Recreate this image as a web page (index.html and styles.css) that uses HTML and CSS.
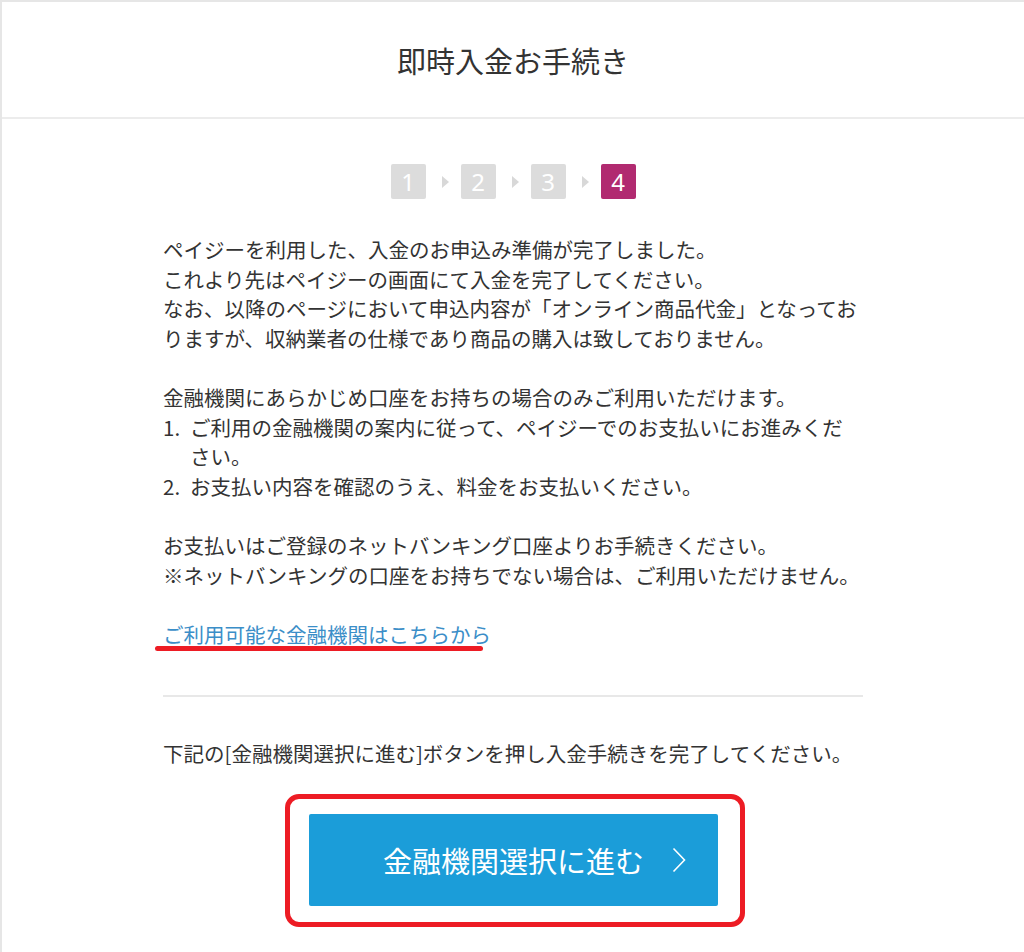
FILE: index.html
```html
<!DOCTYPE html>
<html lang="ja">
<head>
<meta charset="utf-8">
<title>即時入金お手続き</title>
<link rel="stylesheet" href="styles.css">
</head>
<body>
<div class="card">
  <header class="card-header">
    <h1 class="title">即時入金お手続き</h1>
  </header>
  <main class="content">
    <div class="steps">
      <span class="step">1</span>
      <span class="step-arrow"></span>
      <span class="step">2</span>
      <span class="step-arrow"></span>
      <span class="step">3</span>
      <span class="step-arrow"></span>
      <span class="step active">4</span>
    </div>

    <div class="body-text">
      <p class="para">ペイジーを利用した、入金のお申込み準備が完了しました。<br>これより先はペイジーの画面にて入金を完了してください。<br>なお、以降のページにおいて申込内容が「オンライン商品代金」となっておりますが、収納業者の仕様であり商品の購入は致しておりません。</p>

      <div class="para">
        <p class="line">金融機関にあらかじめ口座をお持ちの場合のみご利用いただけます。</p>
        <ol class="steps-list">
          <li class="list-item"><span class="num">1.</span><span class="item-text">ご利用の金融機関の案内に従って、ペイジーでのお支払いにお進みください。</span></li>
          <li class="list-item"><span class="num">2.</span><span class="item-text">お支払い内容を確認のうえ、料金をお支払いください。</span></li>
        </ol>
      </div>

      <p class="para">お支払いはご登録のネットバンキング口座よりお手続きください。<br>※ネットバンキングの口座をお持ちでない場合は、ご利用いただけません。</p>

      <p class="link-line"><a class="bank-link" href="#">ご利用可能な金融機関はこちらから</a></p>
    </div>

    <hr class="divider">

    <p class="instruction">下記の[金融機関選択に進む]ボタンを押し入金手続きを完了してください。</p>

    <div class="highlight">
      <a class="primary-btn" href="#">金融機関選択に進む<svg class="chev" width="14" height="26" viewBox="0 0 14 26"><polyline points="1.5,1.5 12.5,13 1.5,24.5" fill="none" stroke="#ffffff" stroke-width="1.6"/></svg></a>
    </div>
  </main>
</div>
</body>
</html>
```
FILE: styles.css
```css
html, body {
  margin: 0;
  padding: 0;
}
body {
  background: #e6e6e6;
  padding: 2px 0 0 2px;
  font-family: "Noto Sans CJK JP", "Noto Sans", sans-serif;
  color: #333333;
  overflow: hidden;
}
.card {
  background: #ffffff;
  min-height: 960px;
}
.card-header {
  height: 115px;
  display: flex;
  align-items: center;
  justify-content: center;
  border-bottom: 2px solid #ececec;
}
.title {
  margin: 0;
  font-size: 29px;
  font-weight: 400;
  line-height: 40px;
  color: #333333;
}
.content {
  width: 700px;
  margin: 0 auto;
  padding-top: 45px;
}
.steps {
  display: flex;
  justify-content: center;
  align-items: center;
}
.step {
  width: 35px;
  height: 35px;
  border-radius: 2px;
  background: #dcdcdc;
  color: #ffffff;
  font-family: "Noto Sans", "Open Sans", sans-serif;
  font-size: 24px;
  line-height: 35px;
  text-align: center;
}
.step.active {
  background: #b12a70;
}
.step-arrow {
  width: 35px;
  height: 35px;
  display: flex;
  align-items: center;
  justify-content: center;
}
.step-arrow::before {
  content: "";
  display: block;
  margin-left: 4px;
  border-left: 7px solid #d8d8d8;
  border-top: 6px solid transparent;
  border-bottom: 6px solid transparent;
}
.body-text {
  margin-top: 36px;
  font-size: 20.5px;
  line-height: 29.6px;
}
.para {
  margin: 0 0 29.6px;
}
.line {
  margin: 0;
}
.steps-list {
  list-style: none;
  margin: 0;
  padding: 0;
}
.list-item {
  display: flex;
}
.num {
  flex: 0 0 27px;
}
.item-text {
  flex: 1;
}
.link-line {
  margin: 0;
  position: relative;
}
.bank-link {
  color: #3b8ec8;
  text-decoration: none;
}
.link-line::after {
  content: "";
  position: absolute;
  left: -8px;
  top: 26px;
  width: 328px;
  height: 5px;
  border-radius: 3px;
  background: #ed1c24;
}
.divider {
  margin: 46px 0 0;
  border: 0;
  height: 2px;
  background: #e8e8e8;
}
.instruction {
  margin: 42px 0 0;
  font-size: 20.5px;
  line-height: 29.6px;
}
.highlight {
  width: 409px;
  margin: 25px 0 0 122px;
  padding: 15px 22px 16px 19px;
  border: 5px solid #ed1c24;
  border-radius: 14px;
}
.primary-btn {
  position: relative;
  display: block;
  height: 92px;
  line-height: 92px;
  background: #1b9dd9;
  color: #ffffff;
  text-align: center;
  font-size: 29px;
  text-decoration: none;
  border-radius: 2px;
}
.chev {
  position: absolute;
  right: 32px;
  top: 33px;
}
```
